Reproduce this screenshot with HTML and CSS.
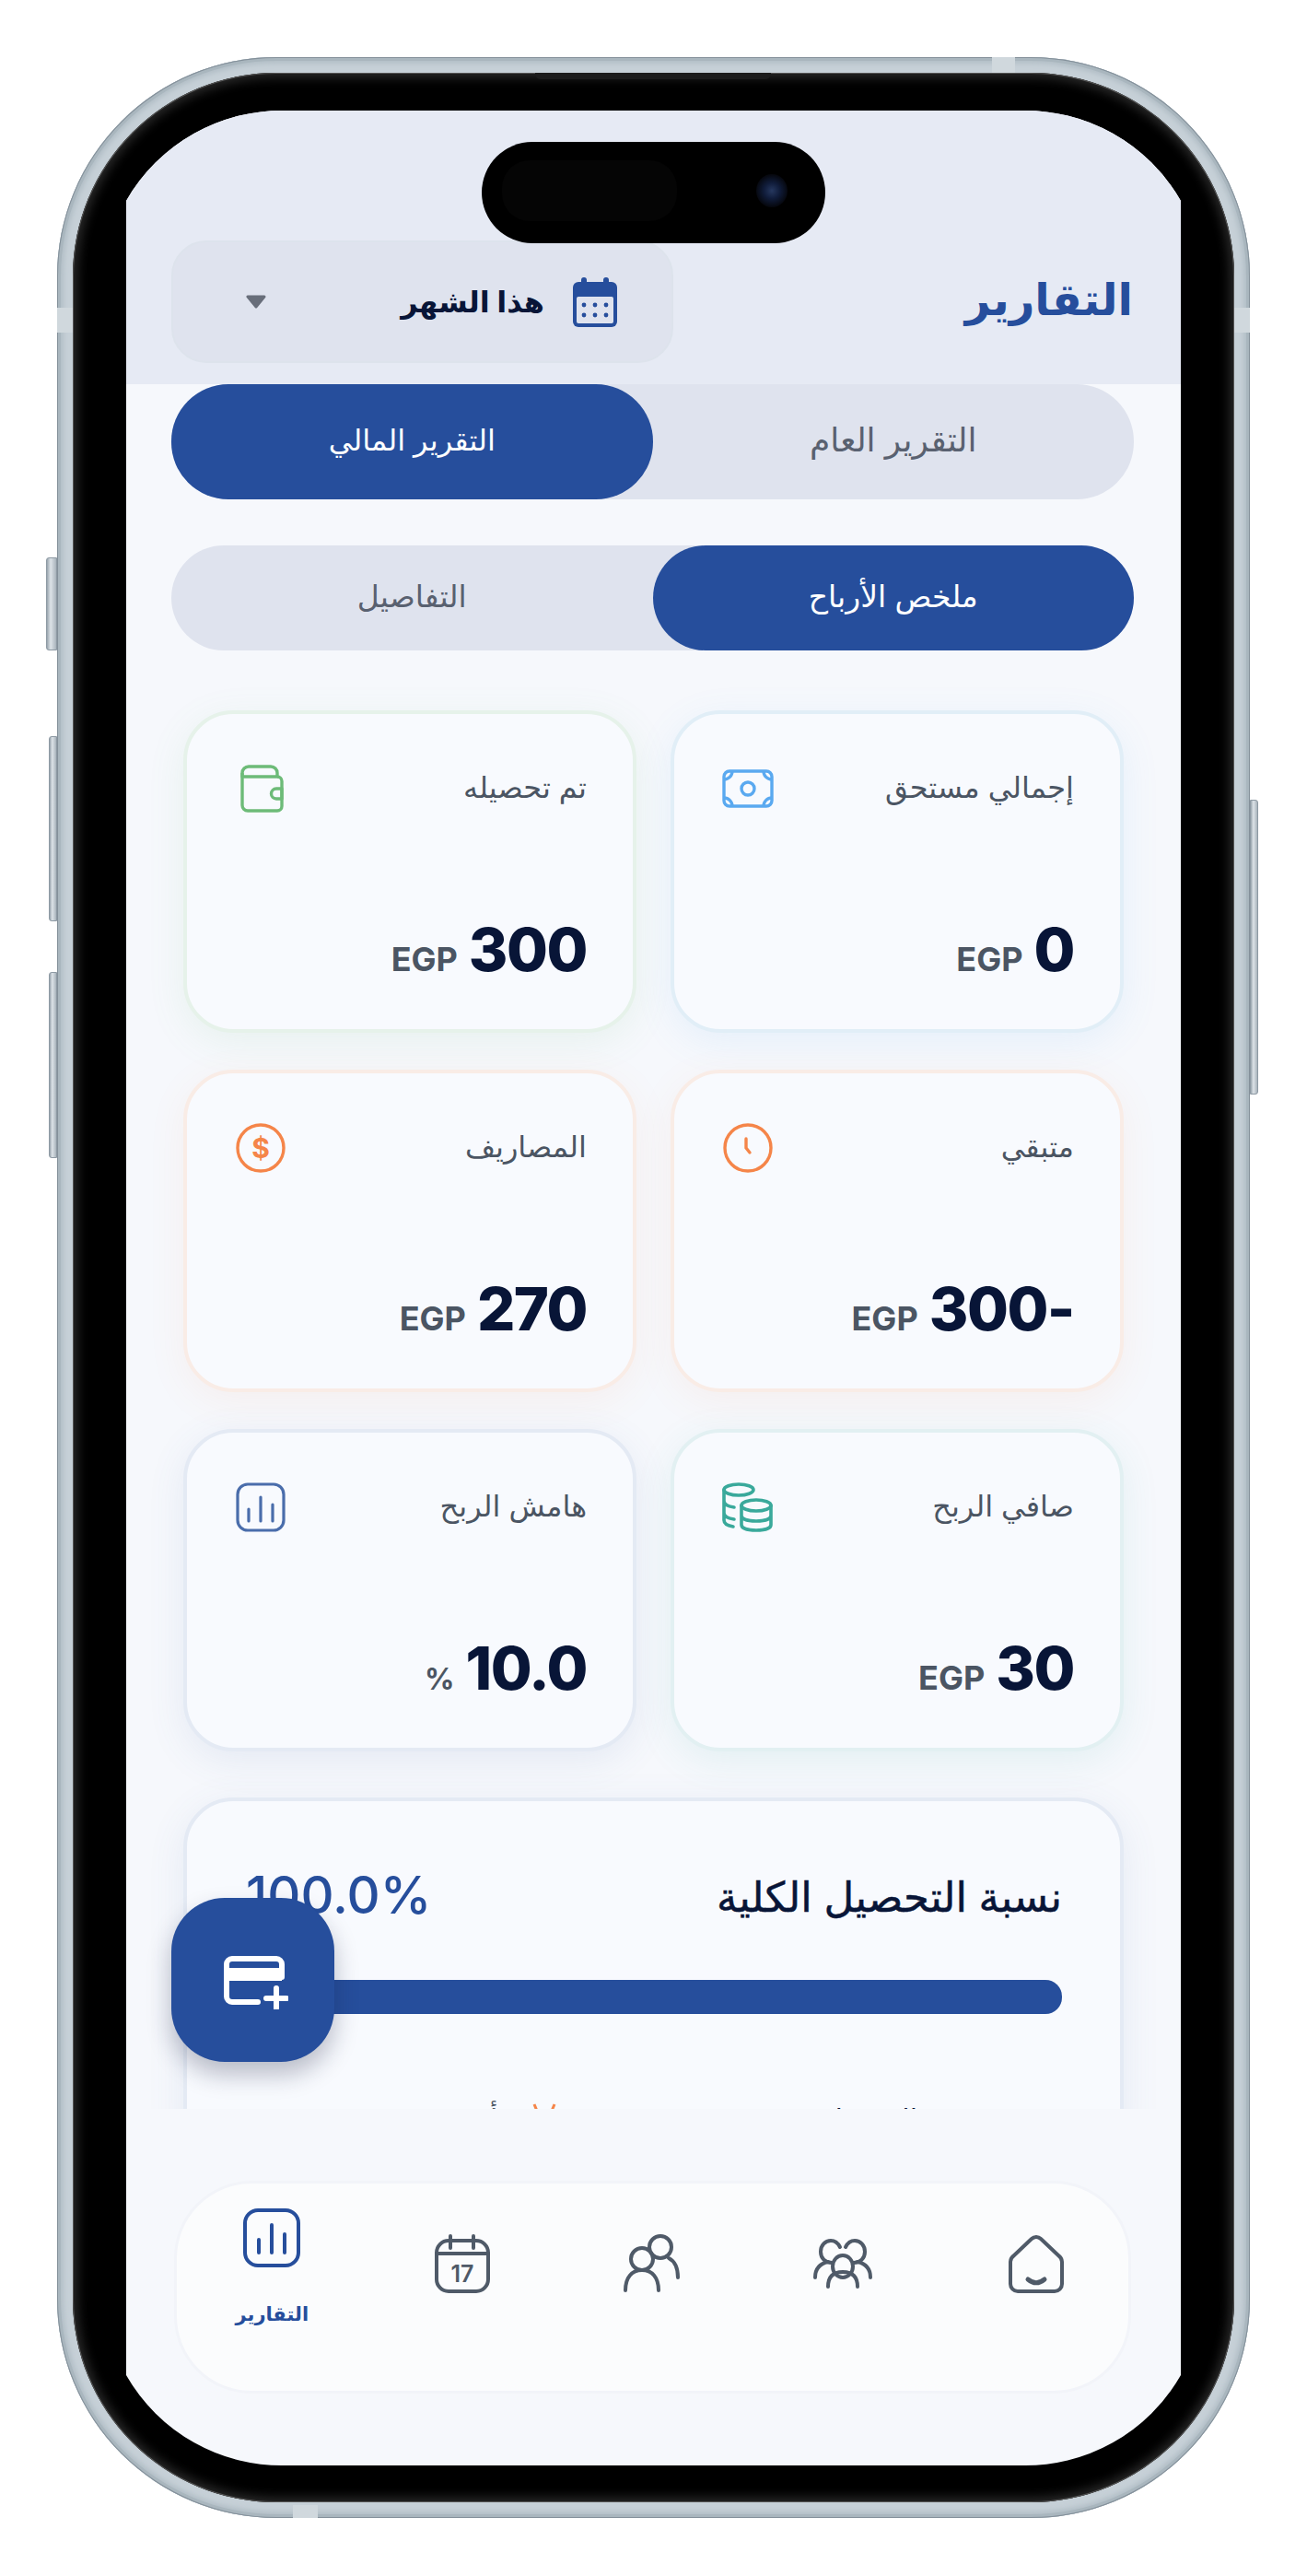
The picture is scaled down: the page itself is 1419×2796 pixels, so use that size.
FILE: index.html
```html
<!DOCTYPE html>
<html lang="ar" dir="rtl">
<head>
	<meta charset="UTF-8">
	<title>التقارير</title>
	<link rel="stylesheet" href="styles.css">
</head>
<body>
	<div class="phone">
		<span class="side-btn btn-mute"></span>
		<span class="side-btn btn-up"></span>
		<span class="side-btn btn-down"></span>
		<span class="side-btn btn-power"></span>
		<span class="band band-top"></span>
		<span class="band band-bottom"></span>
		<span class="band band-left"></span>
		<span class="band band-right"></span>
		<div class="bezel">
			<span class="speaker"></span>
			<div class="screen">
				<div class="notch">
					<span class="notch-pill"></span>
					<span class="camera"></span>
				</div>

				<header class="topbar">
					<h1 class="page-title">التقارير</h1>
					<div class="period">
						<svg class="period-icon" viewBox="0 0 48 54">
							<rect x="9" y="0" width="6" height="10" rx="3" fill="#264e9c"/>
							<rect x="33" y="0" width="6" height="10" rx="3" fill="#264e9c"/>
							<rect x="0" y="5" width="48" height="49" rx="6" fill="#264e9c"/>
							<rect x="4" y="21" width="40" height="29" rx="2" fill="#dfe3ee"/>
							<g fill="#264e9c">
								<circle cx="12" cy="30" r="2.4"/><circle cx="24" cy="30" r="2.4"/><circle cx="36" cy="30" r="2.4"/>
								<circle cx="12" cy="41" r="2.4"/><circle cx="24" cy="41" r="2.4"/><circle cx="36" cy="41" r="2.4"/>
							</g>
						</svg>
						<span class="period-text">هذا الشهر</span>
						<svg class="period-arrow" viewBox="0 0 24 15"><path d="M3 2h18l-9 11z" fill="#686e7a" stroke="#686e7a" stroke-width="3" stroke-linejoin="round"/></svg>
					</div>
				</header>

				<div class="tabs tabs-main">
					<a class="tab" href="javascript:;">التقرير العام</a>
					<a class="tab active" href="javascript:;">التقرير المالي</a>
				</div>
				<div class="tabs tabs-sub">
					<a class="tab active" href="javascript:;">ملخص الأرباح</a>
					<a class="tab" href="javascript:;">التفاصيل</a>
				</div>

				<main class="content">
					<div class="cards">
						<div class="card card-blue">
							<div class="card-top">
								<span class="card-label">إجمالي مستحق</span>
								<svg class="card-icon" viewBox="0 0 56 54" fill="none" stroke="#5aa9f0" stroke-width="3.4">
									<rect x="2" y="8" width="52" height="38" rx="6"/>
									<circle cx="28" cy="27" r="7"/>
									<path d="M2 17c5 0 9-4 9-9M54 17c-5 0-9-4-9-9M2 37c5 0 9 4 9 9M54 37c-5 0-9 4-9 9"/>
								</svg>
							</div>
							<div class="card-value"><span class="num">0</span><span class="unit">EGP</span></div>
						</div>
						<div class="card card-green">
							<div class="card-top">
								<span class="card-label">تم تحصيله</span>
								<svg class="card-icon" viewBox="0 0 56 54" fill="none" stroke="#6dbb78" stroke-width="3.4" stroke-linejoin="round">
									<path d="M8 10a7 7 0 0 1 7-7h24a7 7 0 0 1 7 7v4H8z"/>
									<path d="M8 10v35a6 6 0 0 0 6 6h32a5 5 0 0 0 5-5V19a5 5 0 0 0-5-5"/>
									<path d="M51 27h-6a5 5 0 0 0 0 11h6z"/>
								</svg>
							</div>
							<div class="card-value"><span class="num">300</span><span class="unit">EGP</span></div>
						</div>
						<div class="card card-orange">
							<div class="card-top">
								<span class="card-label">متبقي</span>
								<svg class="card-icon" viewBox="0 0 56 54" fill="none" stroke="#f58549" stroke-width="3.4" stroke-linecap="round">
									<circle cx="28" cy="27" r="25"/>
									<path d="M26 17v10l4 5"/>
								</svg>
							</div>
							<div class="card-value"><span class="num">-300</span><span class="unit">EGP</span></div>
						</div>
						<div class="card card-orange">
							<div class="card-top">
								<span class="card-label">المصاريف</span>
								<svg class="card-icon" viewBox="0 0 56 54" fill="none" stroke="#f58549" stroke-width="3.4">
									<circle cx="28" cy="27" r="25"/>
									<text class="dollar" x="28" y="38" text-anchor="middle">$</text>
								</svg>
							</div>
							<div class="card-value"><span class="num">270</span><span class="unit">EGP</span></div>
						</div>
						<div class="card card-teal">
							<div class="card-top">
								<span class="card-label">صافي الربح</span>
								<svg class="card-icon" viewBox="0 0 56 54" fill="none" stroke="#3aa99b" stroke-width="3.6" stroke-linecap="round">
									<ellipse cx="18" cy="8" rx="16" ry="6"/>
									<path d="M2 8v33c0 4 4 6 10 7M2 20c0 4 4 6 11 7M2 33c0 4 4 6 11 7"/>
									<ellipse cx="37" cy="25" rx="16" ry="6" fill="#f8fafe"/>
									<path d="M21 25v21c0 4 7 6 16 6s16-2 16-6V25M21 36c0 4 7 6 16 6s16-2 16-6"/>
								</svg>
							</div>
							<div class="card-value"><span class="num">30</span><span class="unit">EGP</span></div>
						</div>
						<div class="card card-slate">
							<div class="card-top">
								<span class="card-label">هامش الربح</span>
								<svg class="card-icon" viewBox="0 0 56 54" fill="none" stroke="#4a6dab" stroke-width="3.2" stroke-linecap="round">
									<rect x="3" y="2" width="50" height="50" rx="11"/>
									<path d="M15 29v13M28 16v26M41 24v18"/>
								</svg>
							</div>
							<div class="card-value"><span class="num">10.0</span><span class="unit unit-pct">%</span></div>
						</div>
					</div>

					<section class="collect">
						<div class="collect-head">
							<h2 class="collect-title">نسبة التحصيل الكلية</h2>
							<span class="collect-pct">100.0%</span>
						</div>
						<div class="progress"><div class="progress-fill" style="width: 100%"></div></div>
						<div class="collect-foot">
							<span class="foot-item">المحصل</span>
							<span class="foot-item foot-late">
								<svg class="foot-icon" viewBox="0 0 30 30" fill="none" stroke="#f58549" stroke-width="3"><path d="M4 2l5 12M26 2l-5 12"/></svg>
								متأخر
							</span>
						</div>
					</section>
				</main>

				<button class="fab">
					<svg viewBox="0 0 70 58" fill="none" stroke="#fff" stroke-width="6" stroke-linecap="round" stroke-linejoin="round">
						<path d="M37 50H9a6 6 0 0 1-6-6V9a6 6 0 0 1 6-6h48a6 6 0 0 1 6 6v14"/>
						<path d="M3 20h60" stroke-width="14" stroke-linecap="butt"/>
						<path d="M46 46h22M57 35v22"/>
					</svg>
				</button>

				<nav class="bottom-nav">
					<a class="nav-item active" href="javascript:;">
						<svg viewBox="0 0 64 64" fill="none" stroke="#264e9c" stroke-width="4" stroke-linecap="round">
							<rect x="3" y="2" width="58" height="60" rx="14"/>
							<path d="M18 34v14M32 18v30M46 28v20"/>
						</svg>
						<span>التقارير</span>
					</a>
					<a class="nav-item" href="javascript:;">
						<svg viewBox="0 0 64 64" fill="none" stroke="#4f5a68" stroke-width="4" stroke-linecap="round">
							<rect x="4" y="7" width="56" height="55" rx="13"/>
							<path d="M4 21h56M19 2v13M44 2v13"/>
							<text class="cal-day" x="32" y="52" text-anchor="middle">17</text>
						</svg>
					</a>
					<a class="nav-item" href="javascript:;">
						<svg viewBox="0 0 64 64" fill="none" stroke="#4f5a68" stroke-width="4" stroke-linecap="round">
							<ellipse cx="41" cy="14" rx="12" ry="12"/>
							<ellipse cx="21" cy="27" rx="12" ry="12"/>
							<path d="M50 26c6 3 10 10 10 21M3 61c0-14 7-22 18-22s18 8 18 22"/>
						</svg>
					</a>
					<a class="nav-item" href="javascript:;">
						<svg viewBox="0 0 64 64" fill="none" stroke="#4f5a68" stroke-width="4" stroke-linecap="round">
							<path d="M20 31c-7 0-12-5-12-12 0-7 5-12 11-12 4 0 8 3 10 7M35 14c2-4 6-7 10-7 6 0 11 5 11 12 0 7-5 12-12 12"/>
							<ellipse cx="32" cy="35" rx="11" ry="12"/>
							<path d="M2 47c0-9 5-15 14-17M62 47c0-9-5-15-14-17M16 57c0-11 6-16 16-16s16 5 16 16"/>
						</svg>
					</a>
					<a class="nav-item nav-home" href="javascript:;">
						<svg viewBox="0 0 64 64" fill="none" stroke="#4f5a68" stroke-width="4" stroke-linecap="round" stroke-linejoin="round">
							<path d="M27 5a7 7 0 0 1 10 0l19 18a9 9 0 0 1 4 7v24a8 8 0 0 1-8 8H12a8 8 0 0 1-8-8V30a9 9 0 0 1 4-7z"/>
							<path d="M23 49c6 5 12 5 18 0" stroke-width="5"/>
						</svg>
					</a>
				</nav>
			</div>
		</div>
	</div>
</body>
</html>
```

FILE: styles.css
```css
* {
	box-sizing: border-box;
}
html, body {
	margin: 0;
	padding: 0;
}
body {
	background: #fff;
	font-family: Inter, "DejaVu Sans", sans-serif;
	color: #081537;
}
a {
	text-decoration: none;
}

/* device frame */
.phone {
	position: relative;
	direction: ltr;
	width: 1295px;
	height: 2671px;
	margin: 62px 62px 0;
	padding: 17px;
	border-radius: 238px;
	background: #c6d0d7;
	box-shadow: inset 0 0 0 1px #84909a, inset 0 0 0 4px #a9b6be, inset 0 0 5px 7px #b3bfc7;
}
.side-btn {
	position: absolute;
	background: linear-gradient(90deg, #98a4ad, #dde3e8 40%, #a8b3bb);
	border: 1px solid #8d99a3;
}
.btn-mute {
	left: -12px;
	top: 543px;
	width: 12px;
	height: 101px;
	border-radius: 3px 0 0 3px;
}
.btn-up {
	left: -9px;
	top: 737px;
	width: 9px;
	height: 201px;
	border-radius: 3px 0 0 3px;
}
.btn-down {
	left: -9px;
	top: 993px;
	width: 9px;
	height: 202px;
	border-radius: 3px 0 0 3px;
}
.btn-power {
	right: -9px;
	top: 806px;
	width: 9px;
	height: 320px;
	border-radius: 0 3px 3px 0;
}
.band {
	position: absolute;
	background: #d0d8dd;
}
.band-top {
	top: 0;
	left: 1015px;
	width: 25px;
	height: 17px;
}
.band-bottom {
	bottom: 0;
	left: 256px;
	width: 27px;
	height: 14px;
}
.band-left {
	top: 272px;
	left: 0;
	width: 17px;
	height: 27px;
}
.band-right {
	top: 272px;
	right: 0;
	width: 17px;
	height: 27px;
}
.bezel {
	position: relative;
	width: 1261px;
	height: 2637px;
	padding: 41px 58px 40px;
	border-radius: 221px;
	background: #000;
	box-shadow: inset 0 0 0 1px #555, inset 0 0 12px 5px #2a2a2a;
}
.speaker {
	position: absolute;
	top: 0;
	left: 502px;
	width: 256px;
	height: 7px;
	border-radius: 0 0 6px 6px;
	background: #1c1c1c;
}
.screen {
	position: relative;
	direction: rtl;
	display: flex;
	flex-direction: column;
	width: 1145px;
	height: 2556px;
	background: #f6f8fc;
	clip-path: path("M0 98A195 195 0 0 1 175 0H970A195 195 0 0 1 1145 98V2458A195 195 0 0 1 970 2556H175A195 195 0 0 1 0 2458Z");
}
.notch {
	position: absolute;
	z-index: 3;
	top: 34px;
	left: 386px;
	width: 373px;
	height: 110px;
	border-radius: 55px;
	background: #000;
}
.notch-pill {
	position: absolute;
	top: 20px;
	left: 22px;
	width: 190px;
	height: 66px;
	border-radius: 30px;
	background: #050505;
}
.camera {
	position: absolute;
	top: 35px;
	right: 41px;
	width: 34px;
	height: 36px;
	border-radius: 50%;
	background: radial-gradient(circle, #26385f 0, #101c3a 35%, #06080f 70%);
}

/* header */
.topbar {
	flex: none;
	display: flex;
	justify-content: space-between;
	align-items: flex-end;
	height: 297px;
	padding: 0 52px 23px 49px;
	background: #e6eaf4;
}
.page-title {
	margin: 0 0 34px;
	font-size: 48px;
	line-height: 70px;
	font-weight: 700;
	color: #264e9c;
}
.period {
	display: flex;
	align-items: center;
	width: 545px;
	height: 133px;
	padding: 0 59px 0 78px;
	border: 2px solid #dde3ec;
	border-radius: 38px;
	background: #dfe3ee;
}
.period-icon {
	width: 48px;
	height: 54px;
}
.period-text {
	margin-right: 31px;
	font-size: 32px;
	font-weight: 700;
}
.period-arrow {
	width: 24px;
	height: 15px;
	margin-right: auto;
}

/* tabs */
.tabs {
	flex: none;
	display: flex;
	margin: 0 51px 0 49px;
	background: #dfe3ee;
}
.tabs-main {
	height: 125px;
	border-radius: 62px;
}
.tabs-sub {
	height: 114px;
	margin-top: 50px;
	border-radius: 57px;
}
.tab {
	flex: 1;
	display: flex;
	align-items: center;
	justify-content: center;
	padding-bottom: 5px;
	border-radius: inherit;
	font-size: 36px;
	color: #596170;
}
.tabs-main .active {
	font-size: 32px;
}
.tabs-sub .tab {
	font-size: 33px;
}
.tab.active {
	background: #264e9c;
	color: #fff;
}

/* scrolling content */
.content {
	flex: none;
	height: 1545px;
	margin-top: 38px;
	padding: 27px 62px 0;
	overflow: hidden;
}
.cards {
	display: grid;
	grid-template-columns: 492px 492px;
	grid-auto-rows: 350px;
	gap: 40px 37px;
}
.card {
	display: flex;
	flex-direction: column;
	justify-content: space-between;
	padding: 54px 50px 50px 52px;
	border: 4px solid #e3edf6;
	border-radius: 54px;
	background: #f8fafe;
}
.card-blue {
	border-color: #e1eef7;
	box-shadow: 0 10px 40px rgba(90, 169, 240, .1);
}
.card-green {
	border-color: #e6f2ea;
	box-shadow: 0 10px 40px rgba(109, 187, 120, .1);
}
.card-orange {
	border-color: #f9ece6;
	box-shadow: 0 10px 40px rgba(245, 133, 73, .08);
}
.card-teal {
	border-color: #e2f0f2;
	box-shadow: 0 10px 40px rgba(58, 169, 155, .1);
}
.card-slate {
	border-color: #e4eaf4;
	box-shadow: 0 10px 40px rgba(74, 109, 171, .1);
}
.card-top {
	display: flex;
	justify-content: space-between;
	align-items: center;
	height: 54px;
}
.card-label {
	margin-bottom: 4px;
	font-size: 32px;
	color: #4b5563;
}
.card-icon {
	width: 56px;
	height: 54px;
}
.dollar {
	font-family: Inter, sans-serif;
	font-size: 30px;
	font-weight: 700;
	fill: #f58549;
	stroke: none;
}
.card-value {
	display: flex;
	align-items: baseline;
	gap: 12px;
	height: 62px;
	margin-bottom: 5px;
}
.num {
	font-size: 65px;
	line-height: 62px;
	font-weight: 800;
	letter-spacing: -1.5px;
	color: #081537;
}
.unit {
	font-size: 36px;
	line-height: 36px;
	font-weight: 700;
	color: #4b5563;
	direction: ltr;
}
.unit-pct {
	font-size: 32px;
}

/* collection rate */
.collect {
	height: 400px;
	margin-top: 50px;
	padding: 72px 63px 0 64px;
	border: 4px solid #e4eaf4;
	border-radius: 54px;
	background: #f8fafe;
	box-shadow: 0 10px 40px rgba(74, 109, 171, .1);
}
.collect-head {
	display: flex;
	justify-content: space-between;
	align-items: center;
	height: 70px;
}
.collect-title {
	margin: 0 0 7px;
	font-size: 45px;
	font-weight: 400;
	-webkit-text-stroke: .5px #081537;
}
.collect-pct {
	margin-bottom: 10px;
	font-size: 56px;
	font-weight: 500;
	color: #264e9c;
	direction: ltr;
}
.progress {
	height: 37px;
	margin-top: 52px;
	border-radius: 18px;
	background: #e3e7f0;
}
.progress-fill {
	height: 100%;
	border-radius: 18px;
	background: #264e9c;
}
.collect-foot {
	display: flex;
	justify-content: space-between;
	margin-top: 96px;
	padding: 0 157px 0 230px;
	font-size: 30px;
}
.foot-item {
	display: flex;
	align-items: flex-start;
	gap: 10px;
}
.foot-late {
	color: #4b5563;
}
.foot-icon {
	width: 30px;
	height: 30px;
}

/* floating button */
.fab {
	position: absolute;
	left: 49px;
	top: 1940px;
	width: 177px;
	height: 178px;
	padding: 6px 0 0 7px;
	border: 0;
	border-radius: 58px;
	background: #264e9c;
	box-shadow: 0 14px 26px rgba(20, 30, 60, .28);
	display: flex;
	align-items: center;
	justify-content: center;
}
.fab svg {
	width: 70px;
	height: 58px;
}

/* bottom navigation */
.bottom-nav {
	flex: none;
	display: grid;
	grid-template-columns: repeat(5, 1fr);
	direction: ltr;
	height: 231px;
	margin: 78px 54px 0 52px;
	border: 3px solid #f2f4f9;
	border-radius: 84px;
	background: #fbfcfd;
}
.nav-item {
	display: flex;
	flex-direction: column;
	align-items: center;
	padding-top: 55px;
}
.nav-item svg {
	width: 64px;
	height: 64px;
}
.nav-item.active {
	padding-top: 27px;
}
.nav-home svg {
	margin-left: 6px;
}
.nav-item span {
	margin-top: 38px;
	font-size: 21px;
	font-weight: 700;
	color: #264e9c;
}
.cal-day {
	font-family: Inter, sans-serif;
	font-size: 25px;
	font-weight: 600;
	fill: #4f5a68;
	stroke: none;
}
```
